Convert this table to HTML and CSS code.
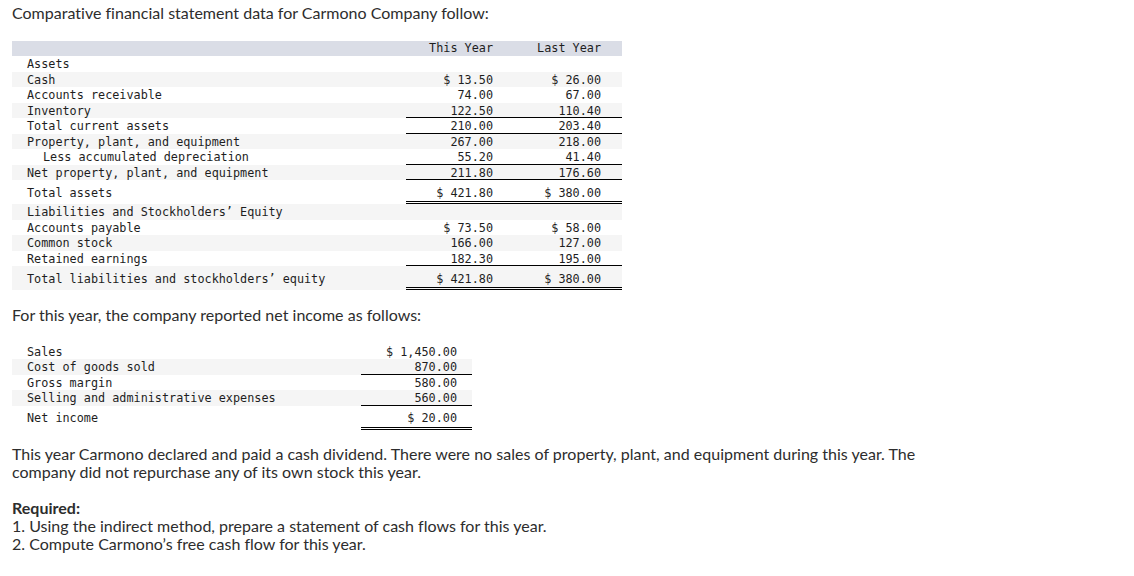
FILE: index.html
```html
<!DOCTYPE html>
<html lang="en">
<head>
<meta charset="utf-8">
<title>Carmono Company</title>
<link rel="stylesheet" href="styles.css">
</head>
<body>
<div class="page">
  <p class="intro">Comparative financial statement data for Carmono Company follow:</p>

  <table class="fin bal">
    <colgroup><col class="c-label"><col class="c-num"><col class="c-num"></colgroup>
    <thead>
      <tr class="head"><th></th><th class="num">This Year</th><th class="num">Last Year</th></tr>
    </thead>
    <tbody>
      <tr><td class="lbl">Assets</td><td></td><td></td></tr>
      <tr class="alt"><td class="lbl">Cash</td><td class="num">$ 13.50</td><td class="num">$ 26.00</td></tr>
      <tr><td class="lbl">Accounts receivable</td><td class="num">74.00</td><td class="num">67.00</td></tr>
      <tr class="alt"><td class="lbl">Inventory</td><td class="num ul">122.50</td><td class="num ul">110.40</td></tr>
      <tr><td class="lbl">Total current assets</td><td class="num ul">210.00</td><td class="num ul">203.40</td></tr>
      <tr class="alt"><td class="lbl">Property, plant, and equipment</td><td class="num">267.00</td><td class="num">218.00</td></tr>
      <tr><td class="lbl indent">Less accumulated depreciation</td><td class="num ul">55.20</td><td class="num ul">41.40</td></tr>
      <tr class="alt"><td class="lbl">Net property, plant, and equipment</td><td class="num ul">211.80</td><td class="num ul">176.60</td></tr>
      <tr class="total"><td class="lbl">Total assets</td><td class="num dbl">$ 421.80</td><td class="num dbl">$ 380.00</td></tr>
      <tr class="alt"><td class="lbl">Liabilities and Stockholders’ Equity</td><td></td><td></td></tr>
      <tr><td class="lbl">Accounts payable</td><td class="num">$ 73.50</td><td class="num">$ 58.00</td></tr>
      <tr class="alt"><td class="lbl">Common stock</td><td class="num">166.00</td><td class="num">127.00</td></tr>
      <tr><td class="lbl">Retained earnings</td><td class="num ul">182.30</td><td class="num ul">195.00</td></tr>
      <tr class="alt total"><td class="lbl">Total liabilities and stockholders’ equity</td><td class="num dbl">$ 421.80</td><td class="num dbl">$ 380.00</td></tr>
    </tbody>
  </table>

  <p class="lead">For this year, the company reported net income as follows:</p>

  <table class="fin inc">
    <colgroup><col class="c-label2"><col class="c-num2"></colgroup>
    <tbody>
      <tr><td class="lbl">Sales</td><td class="num">$ 1,450.00</td></tr>
      <tr class="alt"><td class="lbl">Cost of goods sold</td><td class="num ul">870.00</td></tr>
      <tr><td class="lbl">Gross margin</td><td class="num">580.00</td></tr>
      <tr class="alt"><td class="lbl">Selling and administrative expenses</td><td class="num ul">560.00</td></tr>
      <tr class="total"><td class="lbl">Net income</td><td class="num dbl">$ 20.00</td></tr>
    </tbody>
  </table>

  <p class="para">This year Carmono declared and paid a cash dividend. There were no sales of property, plant, and equipment during this year. The company did not repurchase any of its own stock this year.</p>

  <div class="req">
    <p class="req-title">Required:</p>
    <p class="req-item">1. Using the indirect method, prepare a statement of cash flows for this year.</p>
    <p class="req-item">2. Compute Carmono’s free cash flow for this year.</p>
  </div>
</div>
</body>
</html>
```

FILE: styles.css
```css
html, body {
  margin: 0;
  padding: 0;
  background: #ffffff;
}

.page {
  padding: 4px 12px 0 12px;
  font-family: Lato, "Open Sans", Arial, sans-serif;
  font-size: 16px;
  letter-spacing: 0.01px;
  line-height: 18px;
  color: #2d2d2d;
}

p {
  margin: 0;
}

.intro {
  margin-bottom: 19px;
}

.fin {
  border-collapse: collapse;
  border-spacing: 0;
  table-layout: fixed;
  font-family: "DejaVu Sans Mono", "Liberation Mono", monospace;
  font-size: 11.8px;
  letter-spacing: 0;
  line-height: 14.5px;
  color: #1e1e1e;
}

.bal {
  width: 610px;
}

.c-label { width: 394px; }
.c-num { width: 108px; }

.inc {
  width: 460px;
  margin-top: 19.5px;
}

.c-label2 { width: 349px; }
.c-num2 { width: 111px; }

.fin th,
.fin td {
  padding: 1px 0 0 0;
  border: 0;
  font-weight: normal;
  white-space: nowrap;
}

.fin .head th {
  background: #dadde6;
  height: 15px;
  padding-top: 0;
  padding-bottom: 0;
  line-height: 15px;
}

.fin .alt td {
  background-color: #f5f5f5;
}

.fin .lbl {
  padding-left: 15px;
  text-align: left;
}

.fin .lbl.indent {
  padding-left: 31px;
}

.fin .num {
  text-align: right;
}

.bal .num {
  padding-right: 21px;
}

.inc .num {
  padding-right: 15px;
}

.fin .ul {
  background-image: linear-gradient(to top, #000 0, #000 1px, transparent 1px);
}

.fin .total td {
  padding-top: 5.5px;
  padding-bottom: 4px;
}

.fin .dbl {
  background-image: linear-gradient(to top, #000 0, #000 1px, transparent 1px, transparent 2px, #000 2px, #000 3px, transparent 3px);
}

.lead {
  margin-top: 16px;
}

.para {
  margin-top: 15px;
  width: 930px;
}

.req {
  margin-top: 18px;
}

.req-title {
  font-weight: bold;
}

.req-item {
  line-height: 18.5px;
}
```
